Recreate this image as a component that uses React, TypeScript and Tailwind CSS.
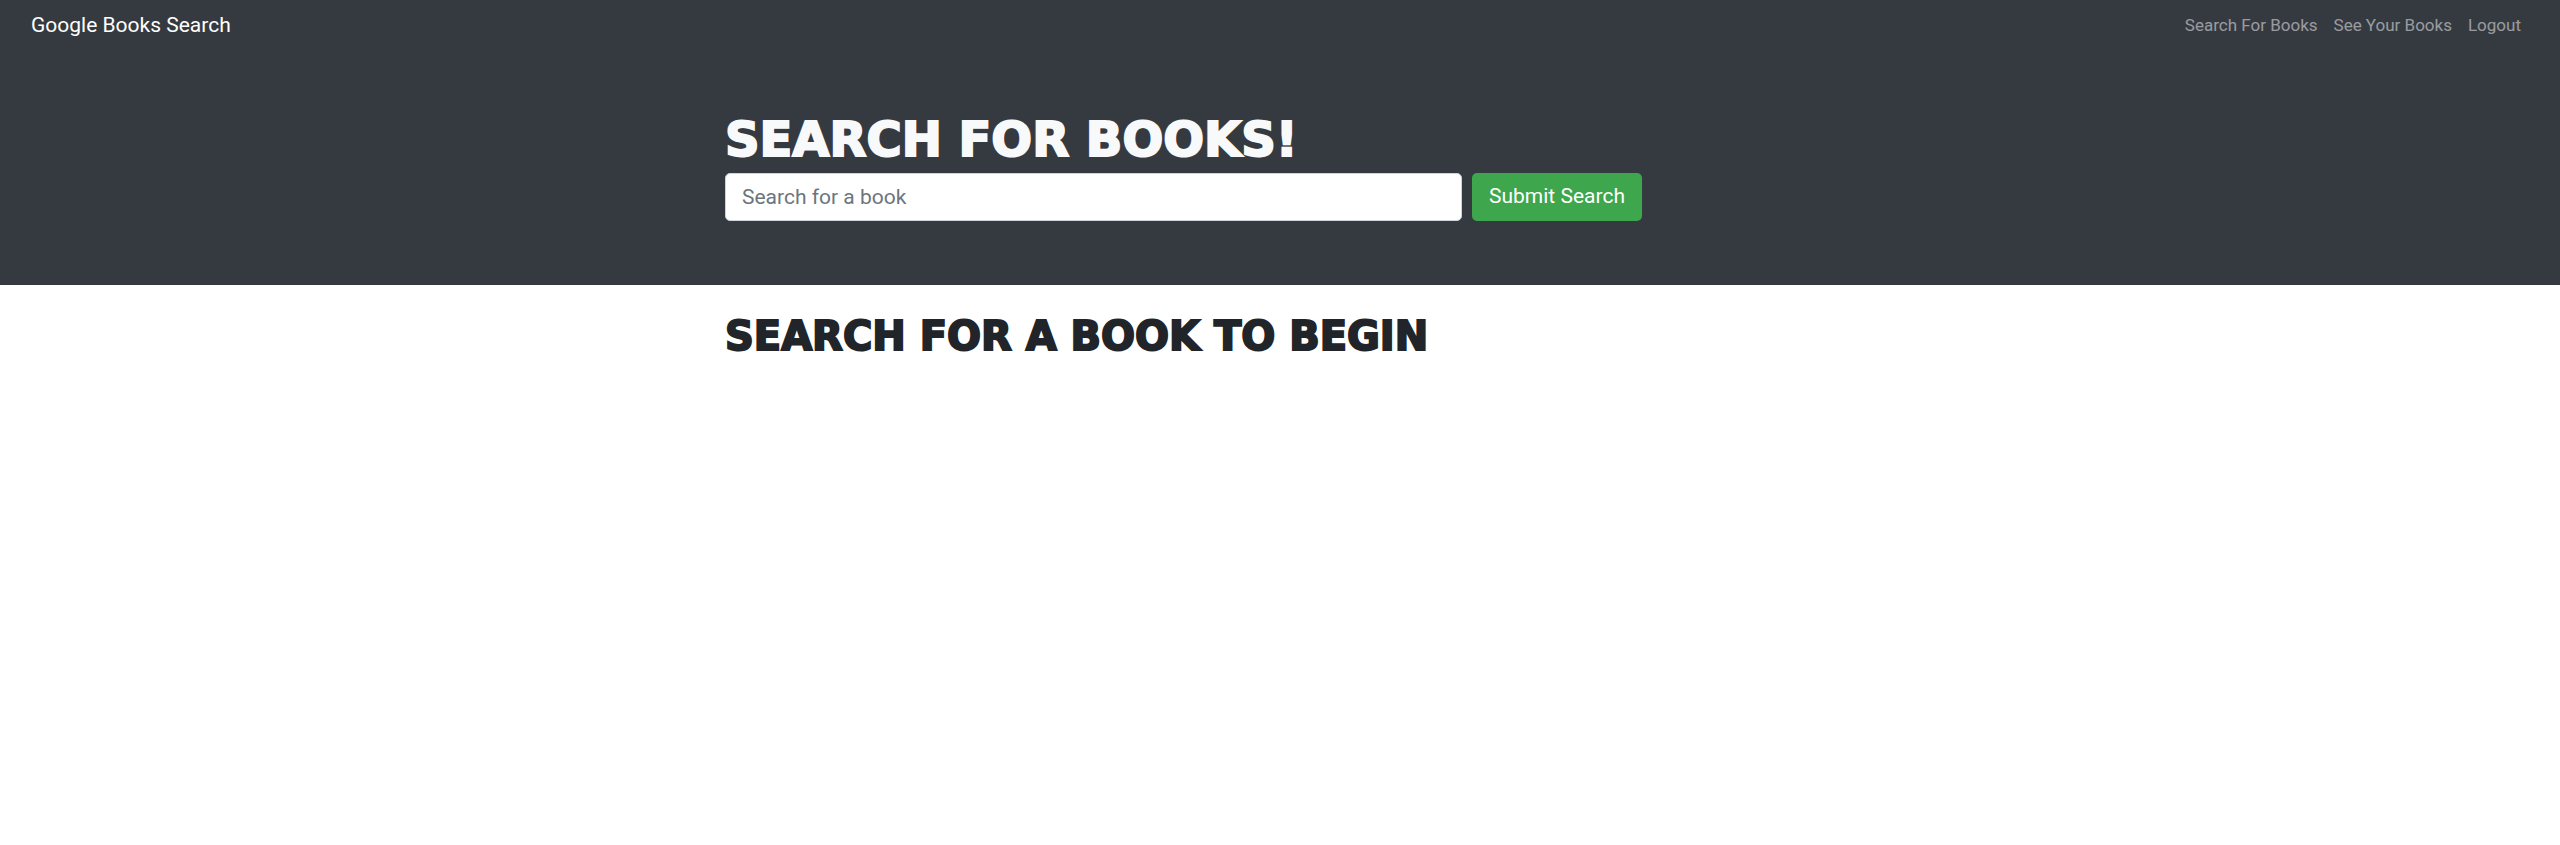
import React from "react";

const links = ["Search For Books", "See Your Books", "Logout"];

export default function App() {
  return (
    <div className="min-h-screen bg-white font-['Roboto',sans-serif] text-base text-[#212529]">
      <header className="bg-[#353a41]">
        <nav className="flex h-[50px] items-center justify-between pr-[39px] pl-[31px]">
          <a href="#" className="text-[21px] leading-[30px] text-white">
            Google Books Search
          </a>
          <ul className="flex gap-4 text-[17px] leading-6 text-white/50">
            {links.map((label) => (
              <li key={label}>
                <a href="#">{label}</a>
              </li>
            ))}
          </ul>
        </nav>
        <section className="mx-auto max-w-[1140px] px-[15px] pt-[67px] pb-16">
          <h1 className="mb-3 font-['DejaVu_Sans',sans-serif] text-[48px] leading-[44px] font-bold text-[#f8f9fa] uppercase [-webkit-text-stroke:2px_#f8f9fa]">
            Search for Books!
          </h1>
          <form className="flex gap-[10px]" onSubmit={(e) => e.preventDefault()}>
            <div className="w-[737px] shrink">
              <input
                type="text"
                aria-label="Search for a book"
                placeholder="Search for a book"
                className="block h-12 w-full rounded-[5px] border border-[#ced4da] bg-white px-4 text-[21px] text-[#495057] placeholder:text-[#6c757d] placeholder:opacity-100"
              />
            </div>
            <button
              type="submit"
              className="h-12 shrink-0 rounded-[5px] bg-[#3ea64c] px-[17px] text-[21px] text-white"
            >
              Submit Search
            </button>
          </form>
        </section>
      </header>
      <main className="mx-auto max-w-[1140px] px-[15px] pt-8">
        <h2 className="font-['DejaVu_Sans',sans-serif] text-[40px] leading-[38px] font-bold uppercase [-webkit-text-stroke:2px_#212529]">
          Search for a book to begin
        </h2>
      </main>
    </div>
  );
}
